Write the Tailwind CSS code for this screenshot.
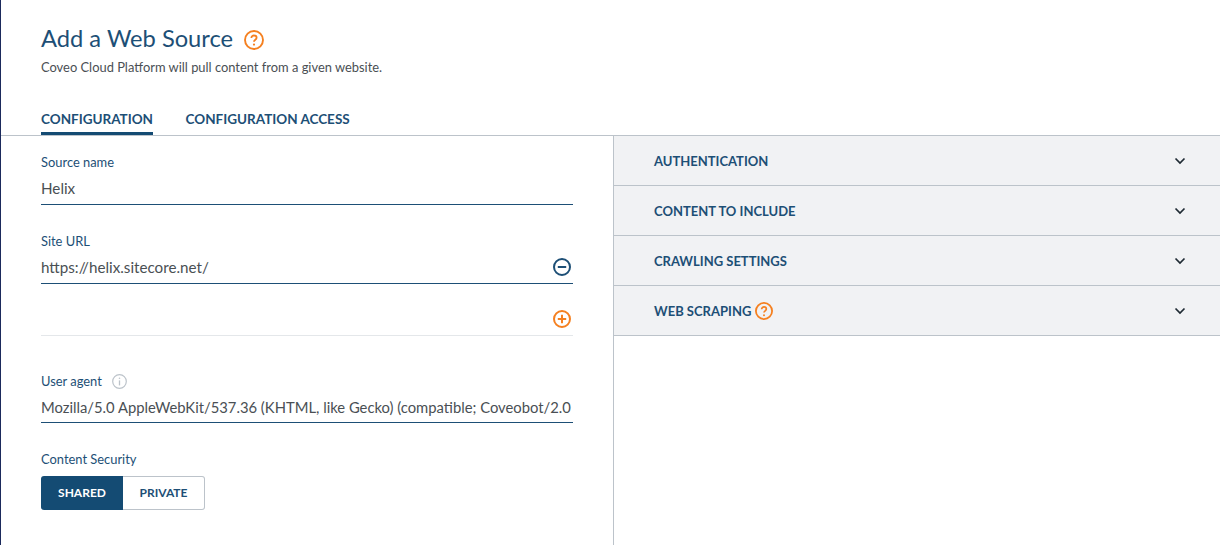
<!DOCTYPE html>
<html lang="en">
<head>
  <meta charset="UTF-8" />
  <title>Add a Web Source</title>
  <script src="https://cdn.jsdelivr.net/npm/@tailwindcss/browser@4"></script>
</head>
<body class="h-[545px] w-[1220px] overflow-hidden bg-white font-['Lato',sans-serif]">
  <div class="flex h-full flex-col border-l border-[#1b2a5c]">
    <!-- Header -->
    <header class="h-[136px] shrink-0 border-b border-[#bcc3ca] pl-[40px]">
      <div class="flex items-center pt-[23px]">
        <h1 class="text-[23.7px] leading-[30px] text-[#1d4f76]">Add a Web Source</h1>
        <svg class="ml-[11px] mt-[3px]" width="20" height="20" viewBox="0 0 20 20" fill="none">
          <circle cx="10" cy="10" r="9" stroke="#f58020" stroke-width="1.9"/>
          <path d="M7.4 8c0-1.6 1.2-2.5 2.6-2.5s2.6.9 2.6 2.3c0 2-2.6 2-2.6 4" stroke="#f58020" stroke-width="1.8" fill="none"/>
          <circle cx="10" cy="14.6" r="1.1" fill="#f58020"/>
        </svg>
      </div>
      <p class="mt-[6px] text-[12.9px] leading-[16px] text-[#4a4f54]">Coveo Cloud Platform will pull content from a given website.</p>
      <nav class="mt-[35px] flex gap-[32.5px] text-[13.5px] font-bold leading-[18px] text-[#1d4f76]">
        <a class="h-[25px] border-b-[3px] border-[#144b73]">CONFIGURATION</a>
        <a>CONFIGURATION ACCESS</a>
      </nav>
    </header>

    <div class="flex min-h-0 flex-1">
      <!-- Form -->
      <main class="w-[613px] shrink-0 border-r border-[#bcc3ca] pl-[40px] pr-[40px]">
        <div class="pt-[18px]">
          <label class="block text-[12.9px] leading-[16px] text-[#1d4f76]">Source name</label>
          <div class="mt-[8px] h-[27px] border-b border-[#1d4f76] text-[15.2px] leading-[20px] text-[#4a4f54]">Helix</div>
        </div>
        <div class="pt-[28px]">
          <label class="block text-[12.9px] leading-[16px] text-[#1d4f76]">Site URL</label>
          <div class="mt-[8px] flex h-[27px] justify-between border-b border-[#1d4f76] text-[15.2px] leading-[20px] text-[#4a4f54]">
            <span>https://helix.sitecore.net/</span>
            <svg class="mr-[2px] mt-[1px]" width="18" height="18" viewBox="0 0 18 18" fill="none">
              <circle cx="9" cy="9" r="8" stroke="#1d4f76" stroke-width="2"/>
              <path d="M4.8 9h8.4" stroke="#1d4f76" stroke-width="2"/>
            </svg>
          </div>
        </div>
        <div class="flex h-[52px] items-start justify-end border-b border-[#e4e7ea] pr-[2px] pt-[26px]">
          <svg width="18" height="18" viewBox="0 0 18 18" fill="none">
            <circle cx="9" cy="9" r="8" stroke="#f58020" stroke-width="2"/>
            <path d="M4.8 9h8.4M9 4.8v8.4" stroke="#f58020" stroke-width="2"/>
          </svg>
        </div>
        <div class="pt-[37px]">
          <div class="flex items-center gap-[10px]">
            <label class="text-[12.9px] leading-[16px] text-[#1d4f76]">User agent</label>
            <svg width="15" height="15" viewBox="0 0 15 15" fill="none">
              <circle cx="7.5" cy="7.5" r="6.8" stroke="#bcc3ca" stroke-width="1.2"/>
              <path d="M7.5 6.4v5" stroke="#bcc3ca" stroke-width="1.3"/>
              <circle cx="7.5" cy="4.2" r=".8" fill="#bcc3ca"/>
            </svg>
          </div>
          <div class="mt-[8px] h-[26px] overflow-hidden whitespace-nowrap border-b border-[#1d4f76] text-[14.8px] leading-[20px] text-[#4a4f54]">Mozilla/5.0 AppleWebKit/537.36 (KHTML, like Gecko) (compatible; Coveobot/2.0</div>
        </div>
        <div class="pt-[28px]">
          <label class="block text-[12.9px] leading-[16px] text-[#1d4f76]">Content Security</label>
          <div class="mt-[9px] flex h-[34px] w-[164px] text-[12px] font-bold">
            <span class="flex w-[82px] items-center justify-center rounded-l-[3px] bg-[#144b73] text-white">SHARED</span>
            <span class="flex w-[82px] items-center justify-center rounded-r-[3px] border border-l-0 border-[#bcc3ca] text-[#1d4f76]">PRIVATE</span>
          </div>
        </div>
      </main>

      <!-- Accordion -->
      <aside class="flex-1 text-[13px] font-bold text-[#1d4f76]">
        <div class="flex h-[50px] items-center justify-between border-b border-[#bcc3ca] bg-[#f1f2f4] pl-[40px] pr-[34px]">
          <span class="pt-[2px]">AUTHENTICATION</span>
          <svg width="12" height="8" viewBox="0 0 12 8" fill="none"><path d="M1.5 1.5 6 6l4.5-4.5" stroke="#1f2a33" stroke-width="1.7"/></svg>
        </div>
        <div class="flex h-[50px] items-center justify-between border-b border-[#bcc3ca] bg-[#f1f2f4] pl-[40px] pr-[34px]">
          <span class="pt-[2px]">CONTENT TO INCLUDE</span>
          <svg width="12" height="8" viewBox="0 0 12 8" fill="none"><path d="M1.5 1.5 6 6l4.5-4.5" stroke="#1f2a33" stroke-width="1.7"/></svg>
        </div>
        <div class="flex h-[50px] items-center justify-between border-b border-[#bcc3ca] bg-[#f1f2f4] pl-[40px] pr-[34px]">
          <span class="pt-[2px]">CRAWLING SETTINGS</span>
          <svg width="12" height="8" viewBox="0 0 12 8" fill="none"><path d="M1.5 1.5 6 6l4.5-4.5" stroke="#1f2a33" stroke-width="1.7"/></svg>
        </div>
        <div class="flex h-[50px] items-center justify-between border-b border-[#bcc3ca] bg-[#f1f2f4] pl-[40px] pr-[34px]">
          <span class="flex items-center gap-[4px]"><span class="pt-[2px]">WEB SCRAPING</span>
            <svg width="18" height="18" viewBox="0 0 20 20" fill="none">
              <circle cx="10" cy="10" r="9" stroke="#f58020" stroke-width="2"/>
              <path d="M7.4 8c0-1.6 1.2-2.5 2.6-2.5s2.6.9 2.6 2.3c0 2-2.6 2-2.6 4" stroke="#f58020" stroke-width="1.9" fill="none"/>
              <circle cx="10" cy="14.6" r="1.1" fill="#f58020"/>
            </svg>
          </span>
          <svg width="12" height="8" viewBox="0 0 12 8" fill="none"><path d="M1.5 1.5 6 6l4.5-4.5" stroke="#1f2a33" stroke-width="1.7"/></svg>
        </div>
      </aside>
    </div>
  </div>
</body>
</html>
